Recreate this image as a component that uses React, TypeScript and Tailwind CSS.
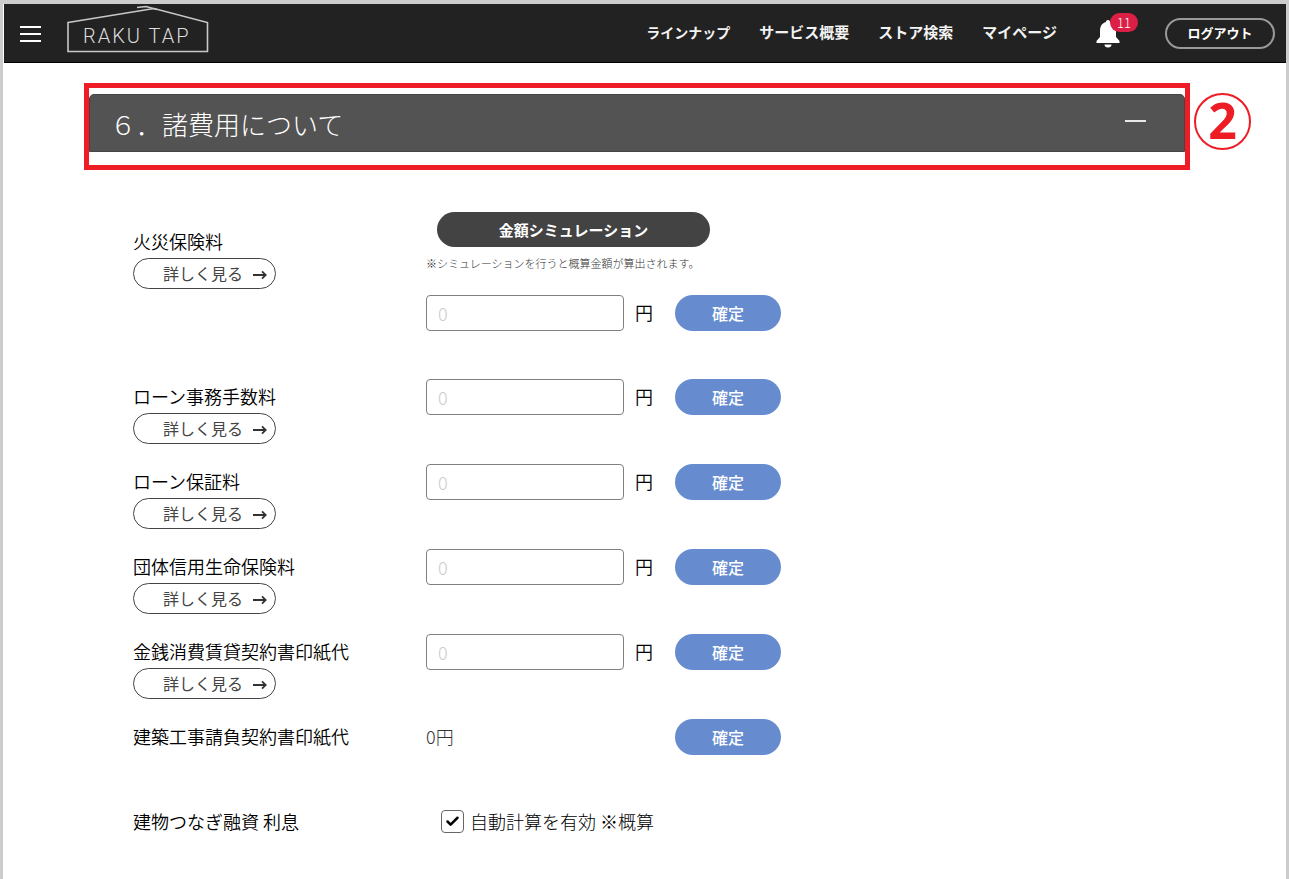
import { Check } from "lucide-react";
import { useState } from "react";

type Fee = {
  id: string;
  label: string;
  hasDetail: boolean;
  fixedAmount?: string;
};

const navLinks = [
  { label: "ラインナップ", size: "text-sm" },
  { label: "サービス概要", size: "text-[15px]" },
  { label: "ストア検索", size: "text-[15px]" },
  { label: "マイページ", size: "text-[15px]" },
];

const fees: Fee[] = [
  { id: "loan-fee", label: "ローン事務手数料", hasDetail: true },
  { id: "loan-guarantee", label: "ローン保証料", hasDetail: true },
  { id: "group-insurance", label: "団体信用生命保険料", hasDetail: true },
  { id: "loan-stamp", label: "金銭消費賃貸契約書印紙代", hasDetail: true },
  {
    id: "construction-stamp",
    label: "建築工事請負契約書印紙代",
    hasDetail: false,
    fixedAmount: "0円",
  },
];

function Logo() {
  return (
    <svg width="144" height="49" viewBox="0 0 144 49" role="img" aria-label="RAKU TAP">
      <g fill="none" stroke="#c9c9c9" strokeWidth="1.600">
        <path d="M2 17.500 88 3.500 141.500 17.500V46.500H2Z" />
        <path d="M71 2.500 80 1.500 91 4.500" />
      </g>
      <text
        x="17"
        y="38"
        fill="#dddddd"
        className="font-['Roboto',sans-serif] text-xl font-light tracking-[2px]"
      >
        RAKU TAP
      </text>
    </svg>
  );
}

function Header() {
  return (
    <header className="flex h-[59px] items-center border-b border-black bg-[#222222] pr-[11px] pl-4 text-white">
      <button type="button" aria-label="メニュー" className="mt-0.5 grid gap-[5px]">
        <span className="h-0.5 w-[21px] bg-white" />
        <span className="h-0.5 w-[21px] bg-white" />
        <span className="h-0.5 w-[21px] bg-white" />
      </button>
      <a href="#" className="mb-2 ml-[25px]">
        <Logo />
      </a>
      <nav className="ml-auto flex items-center gap-[29px] pb-0.5 font-bold text-[#f2f2f2]">
        {navLinks.map((link) => (
          <a key={link.label} href="#" className={`whitespace-nowrap ${link.size}`}>
            {link.label}
          </a>
        ))}
      </nav>
      <button type="button" aria-label="お知らせ" className="relative mt-0.5 ml-[39px]">
        <svg width="24" height="28" viewBox="0 0 24 28" fill="white">
          <path d="M12 0c1.200 0 2 .8 2 2 4 1 6 4.200 6 8.500V17l3.500 4V23H.5V21L4 17v-6.500C4 6.200 6 3 10 2c0-1.200.8-2 2-2Z" />
          <path d="M8.500 24.500h7a3.500 3 0 0 1-7 0Z" />
        </svg>
        <span className="absolute -top-[7px] left-[14px] grid h-[19px] w-[28px] place-items-center rounded-full bg-[#dc1f45] text-[13px] leading-none font-light">
          11
        </span>
      </button>
      <button
        type="button"
        className="ml-[45px] h-[31px] w-[110px] rounded-full border-2 border-[#999999] text-[13px] font-bold"
      >
        ログアウト
      </button>
    </header>
  );
}

function DetailButton() {
  return (
    <button
      type="button"
      className="mt-[5px] flex h-[31px] w-[143px] items-center justify-end gap-2.5 rounded-full border border-[#444444] pr-2 pb-0.5 text-base font-normal text-[#444444]"
    >
      詳しく見る
      <svg
        width="14"
        height="10"
        viewBox="0 0 14 10"
        fill="none"
        stroke="#333333"
        strokeWidth="1.800"
        className="mt-1"
        aria-hidden="true"
      >
        <path d="M0 5H12.500M9 1.300 12.700 5 9 8.700" />
      </svg>
    </button>
  );
}

function ConfirmButton() {
  return (
    <button
      type="button"
      className="h-9 w-[106px] rounded-full bg-[#668ccf] text-base font-medium text-white"
    >
      確定
    </button>
  );
}

function AmountField({ id }: { id: string }) {
  return (
    <div className="flex items-center">
      <input
        id={id}
        type="text"
        inputMode="numeric"
        placeholder="0"
        className="h-9 w-[198px] rounded-[4px] border border-[#808080] px-[11px] text-lg leading-6 font-light placeholder:text-[#cccccc]"
      />
      <span className="ml-[11px] pb-0.5">円</span>
    </div>
  );
}

function FeeRow({ fee }: { fee: Fee }) {
  return (
    <div className="grid min-h-[85px] grid-cols-[293px_249px_1fr] items-start">
      <div className="pt-[5px]">
        {fee.fixedAmount ? (
          <p>{fee.label}</p>
        ) : (
          <label htmlFor={fee.id} className="block">
            {fee.label}
          </label>
        )}
        {fee.hasDetail ? <DetailButton /> : null}
      </div>
      {fee.fixedAmount ? (
        <p className="pt-[5px] font-light text-[#333333]">{fee.fixedAmount}</p>
      ) : (
        <AmountField id={fee.id} />
      )}
      <ConfirmButton />
    </div>
  );
}

export default function App() {
  const [open, setOpen] = useState(true);
  const [autoCalc, setAutoCalc] = useState(true);

  return (
    <div className="min-h-screen border-x-[3px] border-t-4 border-[#cccccc] bg-white pl-px font-['Noto_Sans_CJK_JP',sans-serif] text-black">
      <Header />
      <main>
        <div className="flex items-start gap-1 pt-5 pr-[35px] pl-20">
          <div className="flex-1 border-[5px] border-[#ee1c25] pt-1.5 pb-[13px]">
            <button
              type="button"
              aria-expanded={open}
              onClick={() => setOpen(!open)}
              className="flex h-[58px] w-full items-center justify-between rounded-t-[5px] border border-[#444444] bg-[#535353] pr-[38px] pl-5 text-white"
            >
              <span className="text-[26px] font-light">６．諸費用について</span>
              <span className="mb-1 h-0.5 w-[21px] bg-[#e8e8e8]" />
            </button>
          </div>
          <div className="mt-2.5 grid size-[57px] place-items-center rounded-full border-2 border-[#ee1c25] pb-1 font-['Noto_Sans',sans-serif] text-[50px] leading-none font-bold text-[#ee1c25]">
            2
          </div>
        </div>

        {open ? (
          <section className="pt-[42px] pr-9 pl-[129px] text-lg leading-6 font-[350]">
            <div className="grid min-h-[167px] grid-cols-[293px_1fr] items-start">
              <div className="pt-[17px]">
                <label htmlFor="fire-insurance" className="block">
                  火災保険料
                </label>
                <DetailButton />
              </div>
              <div>
                <button
                  type="button"
                  className="ml-[11px] block h-[35px] w-[273px] rounded-full bg-[#434343] text-[15px] font-bold text-white"
                >
                  金額シミュレーション
                </button>
                <p className="mt-1 mb-5 text-[11px] leading-6 font-light text-[#333333]">
                  ※シミュレーションを行うと概算金額が算出されます。
                </p>
                <div className="grid grid-cols-[249px_1fr]">
                  <AmountField id="fire-insurance" />
                  <ConfirmButton />
                </div>
              </div>
            </div>

            {fees.map((fee) => (
              <FeeRow key={fee.id} fee={fee} />
            ))}

            <div className="mt-[5px] grid grid-cols-[293px_1fr]">
              <p>建物つなぎ融資 利息</p>
              <label className="ml-[15px] flex items-center gap-1.5 font-light">
                <span className="relative grid size-[23px] place-items-center">
                  <input
                    type="checkbox"
                    checked={autoCalc}
                    onChange={(event) => setAutoCalc(event.target.checked)}
                    className="size-[23px] appearance-none rounded-[4px] border border-[#666666]"
                  />
                  {autoCalc ? (
                    <Check size={15} strokeWidth={4} className="pointer-events-none absolute" />
                  ) : null}
                </span>
                自動計算を有効 ※概算
              </label>
            </div>
          </section>
        ) : null}
      </main>
    </div>
  );
}
